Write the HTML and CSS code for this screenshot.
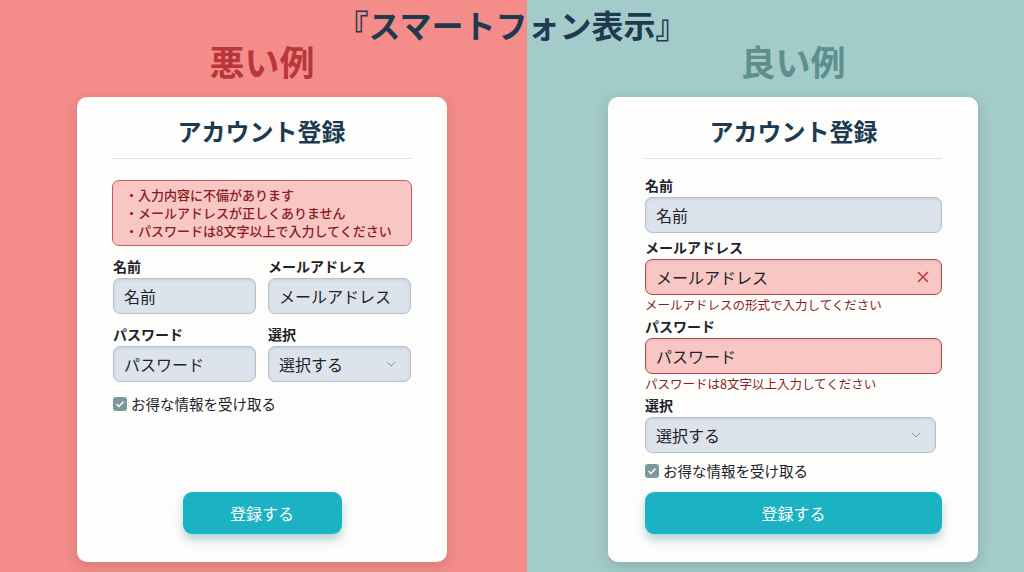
FILE: index.html
```html
<!DOCTYPE html>
<html lang="ja">
<head>
    <meta charset="UTF-8">
    <meta name="viewport" content="width=device-width, initial-scale=1.0">
    <title>スマートフォン表示</title>
    <link rel="stylesheet" href="styles.css">
</head>
<body>
    <h1 class="page-title">『スマートフォン表示』</h1>

    <div class="compare">
        <!-- Bad example -->
        <section class="column">
            <h2 class="example-title bad">悪い例</h2>
            <div class="card">
                <h3 class="card-title">アカウント登録</h3>
                <hr class="divider">
                <div class="error-box">
                    <p>・入力内容に不備があります</p>
                    <p>・メールアドレスが正しくありません</p>
                    <p>・パスワードは8文字以上で入力してください</p>
                </div>
                <div class="grid-form">
                    <div class="group">
                        <label class="label">名前</label>
                        <div class="field"><span>名前</span></div>
                    </div>
                    <div class="group">
                        <label class="label">メールアドレス</label>
                        <div class="field"><span>メールアドレス</span></div>
                    </div>
                    <div class="group">
                        <label class="label">パスワード</label>
                        <div class="field"><span>パスワード</span></div>
                    </div>
                    <div class="group">
                        <label class="label">選択</label>
                        <div class="field">
                            <span>選択する</span>
                            <svg class="chevron" width="10" height="6" viewBox="0 0 10 6"><path d="M1 1l4 4 4-4" fill="none" stroke="#8a929c" stroke-width="1"/></svg>
                        </div>
                    </div>
                </div>
                <div class="check-row check-bad">
                    <span class="checkbox"><svg width="10" height="8" viewBox="0 0 10 8"><path d="M1.5 4l2.5 2.5 4.5-5" fill="none" stroke="#fff" stroke-width="1.4"/></svg></span>
                    お得な情報を受け取る
                </div>
                <button class="submit submit-small">登録する</button>
            </div>
        </section>

        <!-- Good example -->
        <section class="column">
            <h2 class="example-title good">良い例</h2>
            <div class="card card-good">
                <h3 class="card-title">アカウント登録</h3>
                <hr class="divider">
                <label class="label label-first">名前</label>
                <div class="field"><span>名前</span></div>

                <label class="label label-next">メールアドレス</label>
                <div class="field field-error">
                    <span>メールアドレス</span>
                    <svg width="12" height="12" viewBox="0 0 12 12"><path d="M1 1l10 10M11 1L1 11" stroke="#c2393c" stroke-width="1.6"/></svg>
                </div>
                <p class="field-msg">メールアドレスの形式で入力してください</p>

                <label class="label">パスワード</label>
                <div class="field field-error"><span>パスワード</span></div>
                <p class="field-msg">パスワードは8文字以上入力してください</p>

                <label class="label">選択</label>
                <div class="field field-select">
                    <span>選択する</span>
                    <svg class="chevron" width="10" height="6" viewBox="0 0 10 6"><path d="M1 1l4 4 4-4" fill="none" stroke="#8a929c" stroke-width="1"/></svg>
                </div>
                <div class="check-row check-good">
                    <span class="checkbox"><svg width="10" height="8" viewBox="0 0 10 8"><path d="M1.5 4l2.5 2.5 4.5-5" fill="none" stroke="#fff" stroke-width="1.4"/></svg></span>
                    お得な情報を受け取る
                </div>
                <button class="submit submit-wide">登録する</button>
            </div>
        </section>
    </div>
</body>
</html>
```

FILE: styles.css
```css
* {
    box-sizing: border-box;
}
body {
    margin: 0;
    height: 572px;
    overflow: hidden;
    font-family: "Noto Sans CJK JP", "Noto Sans", sans-serif;
    color: #1f2a33;
    background: linear-gradient(to right, #f48d89 0, #f48d89 527px, #a2cbca 527px, #a2cbca 100%);
}
.page-title {
    margin: 0;
    padding-top: 6px;
    height: 40px;
    font-size: 32px;
    line-height: 36px;
    font-weight: 700;
    color: #1e3a4f;
    text-align: center;
}
.compare {
    display: flex;
    gap: 161px;
    padding-left: 77px;
}
.column {
    width: 370px;
}
.example-title {
    margin: 0;
    height: 57px;
    padding-top: 1px;
    font-size: 35px;
    line-height: 40px;
    font-weight: 700;
    text-align: center;
}
.example-title.bad {
    color: #b9373b;
}
.example-title.good {
    color: #5f8f8c;
}
.card {
    height: 465px;
    background: #fdfdfb;
    border-radius: 10px;
    box-shadow: 0 4px 14px rgba(60, 40, 40, 0.18);
    padding: 17px 35px 28px 34px;
    display: flex;
    flex-direction: column;
}
.card-good {
    padding: 17px 36px 28px 37px;
}
.card-title {
    margin: 0;
    font-size: 24px;
    line-height: 34px;
    font-weight: 700;
    color: #1d3b50;
    text-align: center;
}
.divider {
    margin: 10px 0 0;
    border: none;
    border-top: 1px solid #d4e3e6;
}
.error-box {
    margin: 21px 0 0 1px;
    padding: 5px 12px;
    background: #f8c6c3;
    border: 1px solid #c65a5e;
    border-radius: 7px;
    color: #8a1c22;
    font-size: 13px;
    line-height: 18px;
    font-weight: 500;
}
.error-box p {
    margin: 0;
}
.grid-form {
    display: grid;
    grid-template-columns: 143px 143px;
    column-gap: 12px;
    row-gap: 10px;
    margin: 10px 0 0 2px;
}
.label {
    display: block;
    font-size: 14px;
    line-height: 20px;
    font-weight: 700;
    color: #1c232a;
    margin-bottom: 2px;
}
.field {
    height: 36px;
    display: flex;
    align-items: center;
    justify-content: space-between;
    padding: 0 12px 0 10px;
    background: #dce3ec;
    border: 1px solid #b7c0cb;
    border-radius: 7px;
    box-shadow: inset 0 1px 3px rgba(40, 60, 90, 0.12);
    font-size: 16px;
    color: #1e2329;
}
.field-error {
    background: #f8c7c4;
    border-color: #b8464c;
}
.field-select {
    width: 291px;
}
.chevron {
    margin-right: 2px;
}
.check-row {
    display: flex;
    align-items: center;
    gap: 4px;
    font-size: 14.5px;
    line-height: 20px;
    color: #1e2329;
}
.check-bad {
    margin: 12px 0 0 2px;
}
.checkbox {
    width: 14px;
    height: 14px;
    border-radius: 3px;
    background: #7f989f;
    display: flex;
    align-items: center;
    justify-content: center;
}
.submit {
    margin-top: auto;
    height: 42px;
    border: none;
    border-radius: 9px;
    background: #1bb3c3;
    color: #fff;
    font-family: inherit;
    font-size: 16px;
    box-shadow: 0 6px 10px rgba(20, 120, 130, 0.3);
}
.submit-small {
    width: 159px;
    align-self: center;
    margin-left: 1px;
}
.submit-wide {
    width: 297px;
}
/* good example spacing */
.label-first {
    margin-top: 16px;
}
.label-next {
    margin-top: 4px;
}
.field-msg {
    margin: 1px 0 2px;
    font-size: 12.5px;
    line-height: 18px;
    color: #8a1c22;
}
.check-good {
    margin-top: 8px;
}
```
